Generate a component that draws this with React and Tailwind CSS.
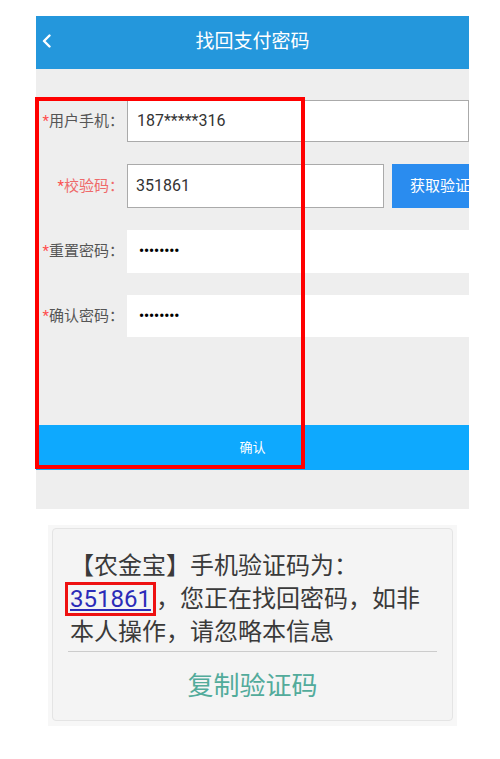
import React from 'react'

const cjk = "font-['Roboto','Noto_Sans_CJK_SC',sans-serif]"

function Label({ text, red }) {
  return (
    <div className={'w-[89px] shrink-0 text-right text-[15px] pr-[1px] ' + (red ? 'text-[#ee6a6a]' : 'text-[#555555]')}>
      <span className="text-[#ff4d4d]">*</span>{text}：
    </div>
  )
}

const App = () => {
  return (
    <div className={'relative w-[500px] h-[759px] bg-white ' + cjk}>
      <div className="pt-4 pl-9">
        <div className="w-[433px]">
          {/* header */}
          <div className="relative h-[53px] bg-[#2497dc] flex items-center justify-center">
            <svg className="absolute left-[6px] top-[18px]" width="10" height="14" viewBox="0 0 10 14" fill="none">
              <polyline points="7.5,1.5 2,7 7.5,12.5" stroke="white" strokeWidth="2.4" strokeLinecap="round" strokeLinejoin="round" />
            </svg>
            <span className="text-white text-[19px]">找回支付密码</span>
          </div>

          {/* form */}
          <div className="h-[440px] bg-[#eeeeee] pt-[31px] overflow-hidden">
            <div className="flex items-center h-[42px]">
              <Label text="用户手机" />
              <div className="flex-1 h-full ml-[2px] bg-white border border-[#aaaaaa] flex items-center pl-[9px] text-[16px] text-[#333333]">
                187*****316
              </div>
            </div>

            <div className="flex items-center h-[44px] mt-[22px]">
              <Label text="校验码" red />
              <div className="w-[257px] shrink-0 h-full ml-[2px] bg-white border border-[#aaaaaa] flex items-center pl-[8px] text-[16px] text-[#333333]">
                351861
              </div>
              <div className="w-[100px] shrink-0 h-full ml-[8px] bg-[#2a8cef] flex items-center pl-[18px] text-white text-[15px] whitespace-nowrap">
                获取验证码
              </div>
            </div>

            <div className="flex items-center h-[43px] mt-[22px]">
              <Label text="重置密码" />
              <div className="flex-1 h-full ml-[2px] bg-white flex items-center pl-[12px] text-[14px] font-bold text-black">
                ••••••••
              </div>
            </div>

            <div className="flex items-center h-[42px] mt-[22px]">
              <Label text="确认密码" />
              <div className="flex-1 h-full ml-[2px] bg-white flex items-center pl-[12px] text-[14px] font-bold text-black">
                ••••••••
              </div>
            </div>

            <div className="mt-[88px] h-[45px] bg-[#0ea9fe] flex items-center justify-center text-white text-[13px]">
              确认
            </div>
          </div>
        </div>
      </div>

      {/* sms */}
      <div className="ml-[48px] mt-4 w-[409px] bg-[#f7f7f7] px-[4px] pt-[3px] pb-[5px]">
        <div className="rounded-[4px] border border-[#e4e4e4] bg-[#f4f4f4] px-[15px] pt-[21px]">
          <div className="pl-[2px] text-[24px] leading-[32px] text-[#3a3a3a] whitespace-nowrap">
            【农金宝】手机验证码为：<br />
            <span className="inline-block -ml-[5px] px-[2px] border-[3px] border-[#ee1111] leading-[28px] text-[#2b2bb8] underline underline-offset-2">351861</span>，您正在找回密码，如非<br />
            本人操作，请忽略本信息
          </div>
          <div className="mt-[3px] h-px bg-[#cccccc]" />
          <div className="h-[68px] flex items-center justify-center text-[26px] text-[#52ab9b]">
            复制验证码
          </div>
        </div>
      </div>

      {/* annotation */}
      <div className="absolute left-[35px] top-[97px] w-[270px] h-[372px] border-4 border-[#ff0000]" />
    </div>
  )
}

export default App
